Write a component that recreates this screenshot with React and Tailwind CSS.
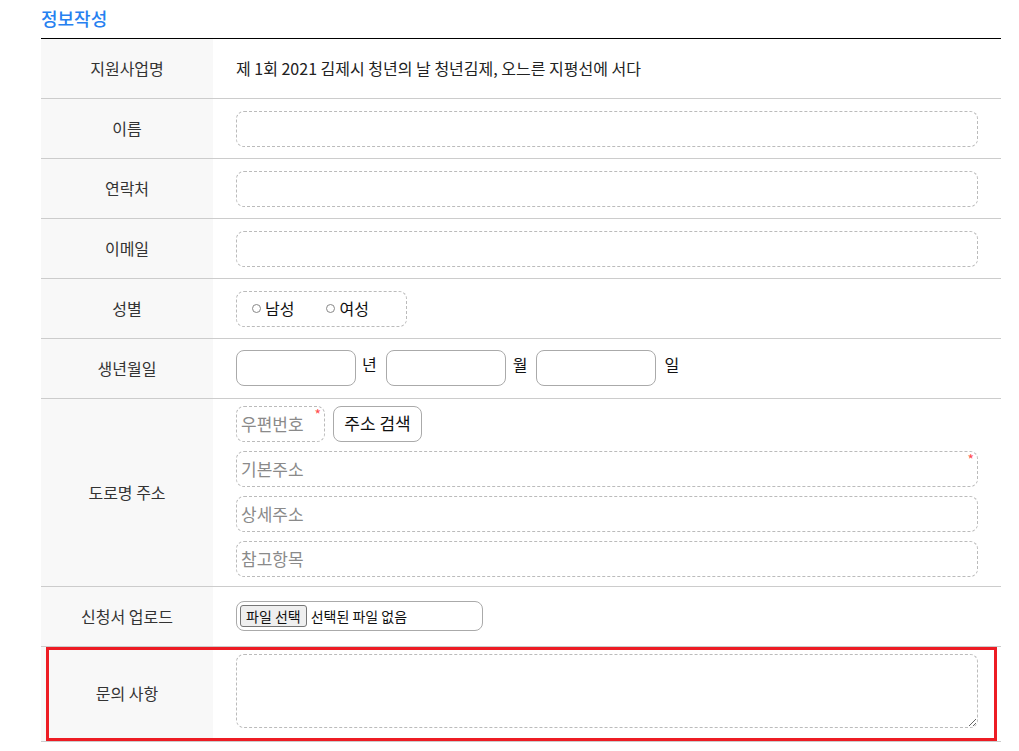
import React from 'react';

// 정보작성 폼 (신청서)
const font = { fontFamily: '"Noto Sans CJK KR", "Noto Sans", sans-serif' };

function Row({ label, children, className = '' }) {
  return (
    <div className={`grid grid-cols-[172px_1fr] border-b border-[#cccccc] ${className}`}>
      <div className="bg-[#f8f8f8] flex items-center justify-center pb-[2px] text-[16px] text-[#333]">
        {label}
      </div>
      <div className="pl-[23px] pr-[23px]">{children}</div>
    </div>
  );
}

function DashedInput({ placeholder, required, className = '' }) {
  return (
    <div className={`relative ${className}`}>
      <input
        type="text"
        placeholder={placeholder}
        className="w-full h-9 border border-dashed border-[#bbbbbb] rounded-lg px-1 pb-[2px] text-[17px] text-[#222] placeholder:text-[#8a8a8a] outline-none bg-white"
      />
      {required && (
        <span className="absolute right-[4px] top-[1px] text-[#ff4d4d] text-[14px] leading-none">*</span>
      )}
    </div>
  );
}

export default function App() {
  return (
    <div className="bg-white min-h-[751px] px-[41px]" style={font}>
      <div className="w-[960px]">
        <h2 className="h-[39px] border-b border-black text-[18px] font-medium text-[#2680f0] leading-[36px]">
          정보작성
        </h2>

        <Row label="지원사업명" className="h-[60px]">
          <div className="h-full flex items-center pb-[2px] text-[16px] text-[#222]">
            제 1회 2021 김제시 청년의 날 청년김제, 오느른 지평선에 서다
          </div>
        </Row>

        <Row label="이름" className="h-[60px]">
          <DashedInput className="mt-3" />
        </Row>

        <Row label="연락처" className="h-[60px]">
          <DashedInput className="mt-3" />
        </Row>

        <Row label="이메일" className="h-[60px]">
          <DashedInput className="mt-3" />
        </Row>

        <Row label="성별" className="h-[60px]">
          <div className="mt-3 w-[171px] h-9 border border-dashed border-[#bbbbbb] rounded-lg flex items-center pl-[15px] pb-[2px] gap-[32px] text-[16px] text-[#111]">
            <label className="flex items-center gap-[4px]">
              <span className="w-[9px] h-[9px] rounded-full border border-[#888]" />
              남성
            </label>
            <label className="flex items-center gap-[4px]">
              <span className="w-[9px] h-[9px] rounded-full border border-[#888]" />
              여성
            </label>
          </div>
        </Row>

        <Row label="생년월일" className="h-[60px]">
          <div className="mt-[11px] flex items-center text-[16px] text-[#111]">
            <input type="text" className="w-[120px] h-9 border border-[#aaaaaa] rounded-lg outline-none" />
            <span className="ml-[6px] mr-[9px] -mt-2">년</span>
            <input type="text" className="w-[120px] h-9 border border-[#aaaaaa] rounded-lg outline-none" />
            <span className="ml-[7px] mr-[9px] -mt-2">월</span>
            <input type="text" className="w-[120px] h-9 border border-[#aaaaaa] rounded-lg outline-none" />
            <span className="ml-[8px] -mt-2">일</span>
          </div>
        </Row>

        <Row label="도로명 주소" className="h-[188px]">
          <div className="pt-[7px] flex flex-col gap-[9px]">
            <div className="flex gap-2">
              <DashedInput placeholder="우편번호" required className="w-[89px]" />
              <button className="w-[89px] h-9 border border-[#aaaaaa] rounded-lg bg-white pb-[2px] text-[17px] text-[#111]">
                주소 검색
              </button>
            </div>
            <DashedInput placeholder="기본주소" required />
            <DashedInput placeholder="상세주소" />
            <DashedInput placeholder="참고항목" />
          </div>
        </Row>

        <Row label="신청서 업로드" className="h-[60px]">
          <div className="mt-[14px] w-[247px] h-[30px] border border-[#aaaaaa] rounded-lg flex items-center pl-[3px] gap-[4px] text-[14px] text-[#111]">
            <span className="h-[22px] px-[5px] flex items-center bg-[#efefef] border border-[#767676] rounded-[3px]">
              파일 선택
            </span>
            <span>선택된 파일 없음</span>
          </div>
        </Row>

        <div className="relative">
          <Row label="문의 사항" className="h-[95px]">
            <textarea className="mt-[7px] w-full h-[74px] block border border-dashed border-[#bbbbbb] rounded-lg outline-none resize-y bg-white" />
          </Row>
          <div className="absolute left-[5px] top-0 w-[951px] h-[94px] border-[3px] border-[#ed1c24] pointer-events-none" />
        </div>
      </div>
    </div>
  );
}
